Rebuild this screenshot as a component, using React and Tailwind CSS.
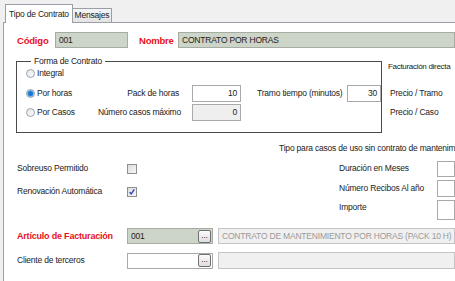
const font = "font-['Liberation_Sans',Arial,sans-serif]";

function Radio({ checked }) {
  return (
    <span className="flex h-[9px] w-[9px] shrink-0 items-center justify-center rounded-full border border-[#9aa3ad] bg-gradient-to-br from-[#e4e6e8] to-[#fafafa]">
      {checked && <span className="h-[5px] w-[5px] rounded-full bg-[#1a78d0] shadow-[0_0_0_1px_#7ab4ea]" />}
    </span>
  );
}

function Check({ checked }) {
  return (
    <span className="flex h-[10px] w-[10px] items-center justify-center border border-[#8f8f8f] bg-gradient-to-br from-[#dcdcdc] to-[#f7f7f7]">
      {checked && (
        <svg viewBox="0 0 10 10" className="h-[8px] w-[8px]">
          <path d="M2 5.2 L4 7.4 L8 1.8" fill="none" stroke="#2142b0" strokeWidth="1.6" />
        </svg>
      )}
    </span>
  );
}

function Dots() {
  return (
    <span className="flex h-[13px] w-[13px] shrink-0 items-end justify-center rounded-[2px] border border-[#707070] bg-gradient-to-b from-[#fbfbfb] to-[#dedede] pb-[2px] text-[8px] leading-none tracking-normal text-black">
      ...
    </span>
  );
}

export default function App() {
  return (
    <div className={`${font} flex h-[281px] w-[455px] flex-col overflow-hidden whitespace-nowrap bg-[#f0f0f0] text-[8.5px] leading-[11px] tracking-[-0.2px] text-[#222]`}>
      {/* tabs */}
      <div className="flex h-[22px] shrink-0 items-end pl-[5px]">
        <div className="relative z-10 mb-[-1px] flex h-[19px] w-[68px] items-center justify-center border border-b-0 border-[#9a9ea6] bg-white">
          Tipo de Contrato
        </div>
        <div className="flex h-[14px] w-[39px] items-center justify-center border border-b-0 border-l-0 border-[#9a9ea6] bg-gradient-to-b from-[#f5f5f5] to-[#e3e3e3]">
          Mensajes
        </div>
      </div>

      {/* panel */}
      <div className="ml-[3px] flex flex-1 flex-col border-l border-t border-[#9a9ea6] bg-white">
        {/* codigo / nombre */}
        <div className="mt-[9px] flex h-[16px] items-center pl-[13px]">
          <span className="w-[38px] text-[9.5px] font-bold text-[#e8101a]">Código</span>
          <div className="flex h-[16px] w-[73px] items-center border border-[#a6aca2] bg-[#cdd4c8] px-[3px]">001</div>
          <span className="ml-[11px] w-[39px] text-[9.5px] font-bold text-[#e8101a]">Nombre</span>
          <div className="flex h-[16px] flex-1 items-center border border-[#a6aca2] bg-[#cdd4c8] px-[3px]">
            CONTRATO POR HORAS
          </div>
        </div>

        {/* forma de contrato */}
        <div className="mt-[8px] flex">
          <fieldset className="ml-[12px] h-[77px] w-[363px] border border-[#4a4a4a] p-0 shadow-[1px_1px_0_#fff]">
            <legend className="ml-[14px] px-[3px] leading-[11px]">Forma de Contrato</legend>
            <div className="flex h-[12px] items-center pl-[9px]">
              <Radio />
              <span className="ml-[2px]">Integral</span>
            </div>
            <div className="mt-[6px] flex h-[17px] items-center pl-[9px]">
              <div className="flex w-[54px] items-center">
                <Radio checked />
                <span className="ml-[2px]">Por horas</span>
              </div>
              <span className="w-[99px] text-right">Pack de horas</span>
              <div className="ml-[13px] flex h-[17px] w-[49px] items-center justify-end border border-[#a9a9a9] bg-white px-[3px]">10</div>
              <span className="ml-[16px] w-[90px]">Tramo tiempo (minutos)</span>
              <div className="flex h-[17px] w-[34px] items-center justify-end border border-[#a9a9a9] bg-white px-[3px]">30</div>
            </div>
            <div className="mt-[2px] flex h-[17px] items-center pl-[9px]">
              <div className="flex w-[54px] items-center">
                <Radio />
                <span className="ml-[2px]">Por Casos</span>
              </div>
              <span className="w-[101px] text-right">Número casos máximo</span>
              <div className="ml-[11px] flex h-[17px] w-[49px] items-center justify-end border border-[#a9a9a9] bg-[#efefef] px-[3px]">0</div>
            </div>
          </fieldset>
          <div className="ml-[6px] flex flex-col">
            <span className="mt-[5px] text-[8px] tracking-[-0.3px]">Facturación directa</span>
            <span className="ml-[2px] mt-[16px]">Precio / Tramo</span>
            <span className="ml-[2px] mt-[8px]">Precio / Caso</span>
          </div>
        </div>

        {/* tipo para casos */}
        <div className="mt-[10px] overflow-hidden pl-[275px]">Tipo para casos de uso sin contrato de mantenimiento</div>

        <div className="mt-[6px] flex">
          <div className="flex w-[240px] flex-col pl-[13px]">
            <div className="flex h-[17px] items-center">
              <span className="w-[110px]">Sobreuso Permitido</span>
              <Check />
            </div>
            <div className="mt-[6px] flex h-[17px] items-center">
              <span className="w-[110px]">Renovación Automática</span>
              <Check checked />
            </div>
          </div>
          <div className="ml-[95px] flex flex-1 flex-col">
            <div className="flex h-[17px] items-center">
              <span className="w-[98px]">Duración en Meses</span>
              <div className="h-[16px] flex-1 border border-[#a9a9a9] bg-white" />
            </div>
            <div className="mt-[3px] flex h-[17px] items-center">
              <span className="w-[98px]">Número Recibos Al año</span>
              <div className="h-[17px] flex-1 border border-[#a9a9a9] bg-white" />
            </div>
            <div className="mt-[3px] flex h-[20px] items-start">
              <span className="mt-[2px] w-[98px]">Importe</span>
              <div className="h-[20px] flex-1 border border-[#a9a9a9] bg-white" />
            </div>
          </div>
        </div>

        {/* articulo */}
        <div className="mt-[8px] flex h-[16px] items-center pl-[13px]">
          <span className="w-[110px] text-[9px] font-bold text-[#e8101a]">Artículo de Facturación</span>
          <div className="flex h-[16px] w-[86px] items-center justify-between border border-[#a6aca2] bg-[#cdd4c8] pl-[3px] pr-[1px]">
            001
            <Dots />
          </div>
          <div className="ml-[5px] flex h-[16px] flex-1 items-center overflow-hidden border border-[#c4c4c4] bg-[#f0f0f0] px-[3px] text-[#9a9a9a]">
            CONTRATO DE MANTENIMIENTO POR HORAS (PACK 10 H)
          </div>
        </div>
        <div className="mt-[8px] flex h-[17px] items-center pl-[13px]">
          <span className="w-[110px]">Cliente de terceros</span>
          <div className="flex h-[16px] w-[86px] items-center justify-end border border-[#a9a9a9] bg-white pr-[1px]">
            <Dots />
          </div>
          <div className="ml-[5px] h-[17px] flex-1 border border-[#c4c4c4] bg-[#f0f0f0]" />
        </div>
      </div>
    </div>
  );
}
